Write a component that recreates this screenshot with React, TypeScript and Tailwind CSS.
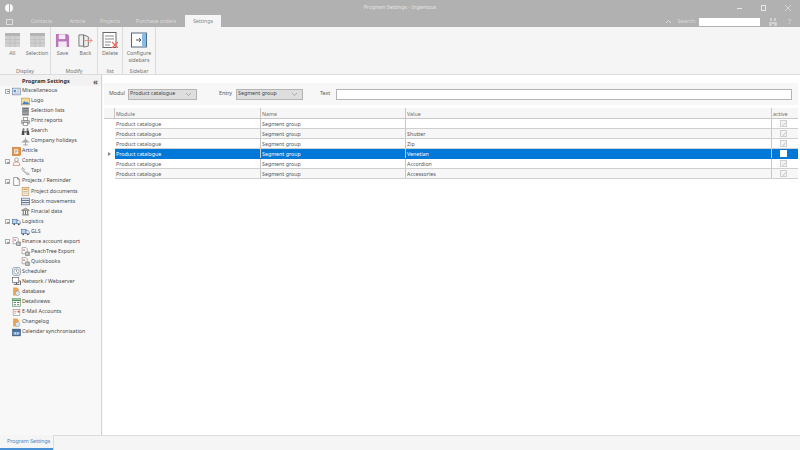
import type { ReactNode } from 'react';

const Svg = ({ s = 9, v = 16, children }: { s?: number; v?: number; children: ReactNode }) => (
  <svg width={s} height={s} viewBox={`0 0 ${v} ${v}`} fill="none" className="shrink-0">
    {children}
  </svg>
);

const treeIcons: Record<string, ReactNode> = {
  misc: (
    <>
      <rect x="1" y="2" width="14" height="12" fill="#e8eef8" stroke="#5a6f92" />
      <rect x="3" y="5" width="4" height="4" fill="#5f92d8" />
      <path d="M9 5h4M9 8h4M3 11h10" stroke="#8a9ab0" />
    </>
  ),
  logo: (
    <>
      <rect x="1" y="2" width="14" height="12" fill="#f4dc9a" stroke="#b08a3a" />
      <path d="M2 13l4-6 3 3 2-2 4 5z" fill="#3f7fd0" />
    </>
  ),
  lists: (
    <>
      <rect x="2" y="1" width="12" height="14" fill="#6f7378" />
      <path d="M2 5h12M2 9h12M2 12h12" stroke="#e8e8e8" />
    </>
  ),
  print: (
    <>
      <rect x="4" y="1" width="8" height="5" fill="#fff" stroke="#666" />
      <rect x="1" y="6" width="14" height="6" rx="1" fill="#c6c6c6" stroke="#666" />
      <rect x="4" y="10" width="8" height="5" fill="#fff" stroke="#666" />
    </>
  ),
  search: (
    <>
      <path d="M2 6h4v8H1zM10 6h4l1 8H10z" fill="#4c4c4c" />
      <path d="M3 2h3v4H3zM10 2h3v4h-3zM6 7h4v3H6z" fill="#777" />
    </>
  ),
  holiday: (
    <>
      <path d="M8 1v14M1 9h14M4 14h8" stroke="#777" />
      <path d="M5 5h6l2 4H3z" fill="#a8a8a8" />
    </>
  ),
  orange: (
    <>
      <rect x="1" y="1" width="14" height="14" fill="#e8913c" stroke="#b86a20" />
      <rect x="4" y="4" width="7" height="8" fill="#fff" />
      <path d="M5 6h5M5 8h5M5 10h3" stroke="#888" />
    </>
  ),
  person: (
    <>
      <circle cx="8" cy="5" r="3.2" fill="#fff" stroke="#666" />
      <path d="M2 15l2-6h8l2 6z" fill="#fff" stroke="#c05a4a" />
    </>
  ),
  phone: (
    <path d="M3 1c-2 1-2 3 0 5l6 6c2 2 4 2 6 1l-3-3-2 1-5-5 1-2z" fill="#f0f0f0" stroke="#777" />
  ),
  page: <path d="M3 1h7l3 3v11H3zM10 1v3h3" fill="#fff" stroke="#555" />,
  doc: (
    <>
      <rect x="2" y="1" width="12" height="14" fill="#fbf2df" stroke="#b8772e" />
      <path d="M4 4h8" stroke="#d98a30" strokeWidth="2" />
      <path d="M4 8h8M4 11h8" stroke="#999" />
    </>
  ),
  stock: (
    <>
      <rect x="1" y="2" width="14" height="12" fill="#eaf1fa" stroke="#3c4f68" />
      <path d="M1 6h14M1 10h14" stroke="#3c4f68" strokeWidth="1.5" />
    </>
  ),
  bank: (
    <>
      <path d="M1 6l7-4 7 4z" fill="#c9b89a" stroke="#555" />
      <path d="M4 7v6M8 7v6M12 7v6" stroke="#555" strokeWidth="1.5" />
      <path d="M2 14h12" stroke="#555" strokeWidth="1.5" />
    </>
  ),
  truck: (
    <>
      <rect x="1" y="4" width="8" height="8" fill="#bcd3ee" stroke="#3a6595" />
      <path d="M9 6h3l3 3v3H9z" fill="#eef3fa" stroke="#3a6595" />
      <circle cx="4" cy="13" r="1.5" fill="#444" />
      <circle cx="12" cy="13" r="1.5" fill="#444" />
    </>
  ),
  finance: (
    <>
      <path d="M2 1h7l2 2v9H2z" fill="#fff" stroke="#777" />
      <path d="M4 4l3 3M7 4l-3 3" stroke="#c9483a" />
      <path d="M8 9h7v6H8zM10.500 9v6M13 9v6" fill="#fff" stroke="#555" />
    </>
  ),
  clock: (
    <>
      <rect x="1" y="1" width="14" height="14" rx="3" fill="#eef2f6" stroke="#66788c" />
      <circle cx="8" cy="8" r="4.500" fill="#fff" stroke="#66788c" />
      <path d="M8 5v3l2 2" stroke="#444" />
    </>
  ),
  network: (
    <>
      <rect x="1" y="1" width="11" height="9" fill="#fff" stroke="#444" />
      <path d="M3 13h10M8 10v3M13 7h2v7" stroke="#444" strokeWidth="1.500" />
    </>
  ),
  db: (
    <>
      <path d="M2 1h7l3 3v11H2z" fill="#f0a24e" />
      <circle cx="10" cy="11" r="4" fill="#dbe9f6" stroke="#7da0c4" />
    </>
  ),
  detail: (
    <>
      <rect x="1" y="1" width="14" height="14" fill="#fff" stroke="#3b8a4a" />
      <path d="M1 4h14" stroke="#3b8a4a" strokeWidth="2.500" />
      <path d="M3 8h4M9 8h4M3 12h4M9 12h4" stroke="#555" strokeWidth="1.500" />
    </>
  ),
  mail: (
    <>
      <rect x="2" y="3" width="12" height="10" fill="#fff" stroke="#777" />
      <path d="M4 6h4M4 9h3" stroke="#c9483a" />
      <rect x="10" y="5" width="3" height="3" fill="#c9483a" />
    </>
  ),
  calendar: (
    <>
      <rect x="1" y="2" width="14" height="12" fill="#3f6f9f" stroke="#2c4c70" />
      <rect x="3" y="7" width="10" height="5" fill="#dbe7f3" />
      <path d="M5 7v5M8 7v5M11 7v5" stroke="#3f6f9f" />
    </>
  ),
};

const tree: [number, string, string, boolean?][] = [
  [0, 'misc', 'Miscellaneous', true],
  [1, 'logo', 'Logo'],
  [1, 'lists', 'Selection lists'],
  [1, 'print', 'Print reports'],
  [1, 'search', 'Search'],
  [1, 'holiday', 'Company holidays'],
  [0, 'orange', 'Article'],
  [0, 'person', 'Contacts', true],
  [1, 'phone', 'Tapi'],
  [0, 'page', 'Projects / Reminder', true],
  [1, 'doc', 'Project documents'],
  [1, 'stock', 'Stock movements'],
  [1, 'bank', 'Finacial data'],
  [0, 'truck', 'Logistics', true],
  [1, 'truck', 'GLS'],
  [0, 'finance', 'Finance account export', true],
  [1, 'finance', 'PeachTree Export'],
  [1, 'finance', 'Quickbooks'],
  [0, 'clock', 'Scheduler'],
  [0, 'network', 'Network / Webserver'],
  [0, 'db', 'database'],
  [0, 'detail', 'Detailviews'],
  [0, 'mail', 'E-Mail Accounts'],
  [0, 'db', 'Changelog'],
  [0, 'calendar', 'Calendar synchronisation'],
];

const rows = [
  ['Product catalogue', 'Segment group', ''],
  ['Product catalogue', 'Segment group', 'Shutter'],
  ['Product catalogue', 'Segment group', 'Zip'],
  ['Product catalogue', 'Segment group', 'Venetian'],
  ['Product catalogue', 'Segment group', 'Accordion'],
  ['Product catalogue', 'Segment group', 'Accessories'],
];

const GridIcon = () => (
  <svg width="15" height="14" viewBox="0 0 15 14" className="shrink-0">
    <rect width="15" height="14" fill="#cfcfcf" />
    <rect width="15" height="3" fill="#b4b4b4" />
    <path d="M0 6.500h15M0 10h15M5 3v11M10 3v11" stroke="#b8b8b8" strokeWidth="0.6" />
  </svg>
);

const RibbonButton = ({ icon, label }: { icon: ReactNode; label: string }) => (
  <div className="flex flex-col items-center gap-[2px]">
    <div className="h-[16px] flex items-center">{icon}</div>
    <span className="text-center leading-[7px] whitespace-pre-line">{label}</span>
  </div>
);

const RibbonGroup = ({ title, gap, width, children }: { title: string; gap: string; width: string; children: ReactNode }) => (
  <div className={`${width} h-full flex flex-col border-r border-[#dcdcdc]`}>
    <div className={`h-[40px] flex justify-center pt-[5px] ${gap}`}>{children}</div>
    <div className="h-[7px] text-center leading-[8px] text-[#777]">{title}</div>
  </div>
);

const Select = ({ value, width }: { value: string; width: string }) => (
  <div className={`${width} h-[11px] bg-[#dedede] border border-[#b4b4b4] flex items-center justify-between pl-[1px] pr-[5px]`}>
    <span className="text-[#444]">{value}</span>
    <svg width="5" height="3" viewBox="0 0 5 3" fill="none">
      <path d="M0 0l2.500 2.500L5 0" stroke="#888" strokeWidth="0.6" />
    </svg>
  </div>
);

export default function App() {
  return (
    <div
      className="w-[800px] h-[450px] overflow-hidden flex flex-col bg-[#f5f5f5] text-[5.300px] text-[#555]"
      style={{ fontFamily: '"Noto Sans", sans-serif' }}
    >
      {/* title bar */}
      <div className="h-[16px] shrink-0 bg-[#b1b1b1] flex items-center pl-[5px] text-[#e4e4e4]">
        <div className="w-[8px] h-[8px] rounded-full bg-white/90 flex justify-center">
          <div className="w-[1px] h-full bg-[#b1b1b1]" />
        </div>
        <div className="flex-1 text-center pl-[132px]">Program Settings - Ingenious</div>
        <div className="w-[145px] flex items-center justify-between pl-[82px] pr-[9px]">
          <div className="w-[5px] h-px bg-[#e8e8e8]" />
          <div className="w-[5px] h-[6px] border border-[#e8e8e8]" />
          <svg width="6" height="6" viewBox="0 0 6 6" stroke="#e8e8e8" strokeWidth="0.7">
            <path d="M0 0l6 6M6 0L0 6" />
          </svg>
        </div>
      </div>

      {/* tab row */}
      <div className="h-[11px] shrink-0 bg-[#b1b1b1] flex items-stretch text-[#dcdcdc]">
        <div className="w-[21px] flex items-center pl-[6px]">
          <div className="w-[7px] h-[6px] border border-[#dcdcdc]" />
        </div>
        <div className="w-[41px] text-center leading-[11px]">Contacts</div>
        <div className="w-[31px] text-center leading-[11px]">Article</div>
        <div className="w-[34px] text-center leading-[11px]">Projects</div>
        <div className="w-[58px] text-center leading-[11px]">Purchase orders</div>
        <div className="w-[36px] -mt-[1px] bg-[#f5f5f5] text-[#888] text-center leading-[12px]">Settings</div>
        <div className="flex-1 flex items-center justify-end pr-[7px]">
          <svg width="5" height="3" viewBox="0 0 5 3" fill="none" className="mr-[7px]">
            <path d="M0 3l2.500-2.500L5 3" stroke="#eee" strokeWidth="0.8" />
          </svg>
          <span className="mr-[3px]">Search:</span>
          <div className="w-[61px] h-[8px] bg-white" />
          <svg width="8" height="8" viewBox="0 0 8 8" fill="#d0d0d0" className="ml-[9px]">
            <path d="M1 0h2v3H1zM5 0h2v3H5zM0 4h3v4H0zM5 4h3v4H5zM3 4h2v2H3z" />
          </svg>
          <span className="ml-[11px] text-[7px] leading-[8px] w-[5px]">?</span>
        </div>
      </div>

      {/* ribbon */}
      <div className="h-[48px] shrink-0 flex border-b border-[#dcdcdc] text-[#707070]">
        <RibbonGroup title="Display" gap="gap-[6px] pl-[3px]" width="w-[51px]">
          <RibbonButton icon={<GridIcon />} label="All" />
          <RibbonButton icon={<GridIcon />} label="Selection" />
        </RibbonGroup>
        <RibbonGroup title="Modify" gap="gap-[8px]" width="w-[47px]">
          <RibbonButton
            icon={
              <Svg s={15}>
                <path d="M1 1h12l2 2v12H1z" fill="#b877b8" />
                <rect x="4" y="1.500" width="7" height="5" fill="#f4e8f4" />
                <rect x="3.500" y="9" width="9" height="6" fill="#f4e8f4" />
              </Svg>
            }
            label="Save"
          />
          <RibbonButton
            icon={
              <Svg s={15}>
                <path d="M1 2h5v12H1zM6 2l5 2v10l-5 1z" fill="#eeeeee" stroke="#777" />
                <path d="M7 8h8M12 5l3 3-3 3" stroke="#f08a7e" />
              </Svg>
            }
            label="Back"
          />
        </RibbonGroup>
        <RibbonGroup title="list" gap="" width="w-[25px]">
          <RibbonButton
            icon={
              <Svg s={16}>
                <rect x="1" y="0.500" width="13" height="15" fill="#fff" stroke="#666" />
                <path d="M3 4h9M3 7h9M3 10h6M3 13h5" stroke="#888" />
                <path d="M10 10l6 6M16 10l-6 6" stroke="#ef6a5a" strokeWidth="1.300" />
              </Svg>
            }
            label="Delete"
          />
        </RibbonGroup>
        <RibbonGroup title="Sidebar" gap="" width="w-[33px]">
          <RibbonButton
            icon={
              <Svg s={16}>
                <rect x="0.500" y="1" width="15" height="14" fill="#fff" stroke="#50687f" />
                <rect x="11" y="1.500" width="4" height="13" fill="#85bcea" />
                <path d="M5 8h5M8 6l2 2-2 2" stroke="#555" />
              </Svg>
            }
            label={'Configure\nsidebars'}
          />
        </RibbonGroup>
      </div>

      {/* main */}
      <div className="flex-1 min-h-0 flex">
        <aside className="w-[102px] shrink-0 border-r border-[#d4d4d4] bg-[#f8f8f8] flex flex-col">
          <div className="h-[11px] shrink-0 bg-[#f2f2f2] flex items-center pl-[22px] pr-[3px] pt-[2px] justify-between">
            <span className="font-bold text-[#333] text-[5.500px]">Program Settings</span>
            <span className="font-bold text-[8px] leading-[8px] text-[#555]">«</span>
          </div>
          <div className="flex flex-col">
            {tree.map(([level, icon, label, expand]) => (
              <div key={label} className={`h-[10.050px] flex items-center ${level ? 'pl-[21px]' : 'pl-[5px]'}`}>
                {level === 0 && (
                  <span className="w-[7px] shrink-0">
                    {expand && (
                      <span className="block w-[5px] h-[5px] border-[0.500px] border-[#aaa] relative">
                        <span className="absolute left-[0.500px] right-[0.500px] top-[1.700px] h-[0.600px] bg-[#888]" />
                      </span>
                    )}
                  </span>
                )}
                <Svg>{treeIcons[icon]}</Svg>
                <span className="ml-[1px] whitespace-nowrap text-[#484848]">{label}</span>
              </div>
            ))}
          </div>
        </aside>

        <div className="flex-1 min-w-0 ml-[1px] flex flex-col bg-white">
          {/* filter */}
          <div className="h-[30px] shrink-0 bg-white pt-[8px] pl-[1px] pr-[2px]">
            <div className="h-[22px] bg-[#f7f7f7] flex items-center pl-[5px] pr-[6px]">
              <span className="w-[19px]">Modul</span>
              <Select value="Product catalogue" width="w-[69px]" />
              <span className="w-[17px] ml-[22px]">Entry</span>
              <Select value="Segment group" width="w-[67px]" />
              <span className="w-[12px] ml-[17px] mr-[4px]">Text</span>
              <div className="flex-1 h-[11px] bg-white border border-[#b4b4b4]" />
            </div>
          </div>
          {/* grid */}
          <div className="ml-[1px] mr-[2px] mt-[3px] flex flex-col">
            <div className="h-[11px] flex bg-[#f6f6f6] border-b border-[#c8c8c8] text-[#707070]">
              <div className="w-[11px] border-r border-[#c8c8c8]" />
              <div className="w-[146px] border-r border-[#c8c8c8] pl-[1px] leading-[12px]">Module</div>
              <div className="w-[145px] border-r border-[#c8c8c8] pl-[1px] leading-[12px]">Name</div>
              <div className="flex-1 border-r border-[#c8c8c8] pl-[1px] leading-[12px]">Value</div>
              <div className="w-[26px] pl-[1px] leading-[12px]">active</div>
            </div>
            {rows.map((row, i) => {
              const selected = i === 3;
              return (
                <div key={i} className="h-[10px] flex items-stretch">
                  <div className="w-[11px] shrink-0 bg-white flex items-center justify-center">
                    {selected && (
                      <svg width="3" height="4" viewBox="0 0 3 4">
                        <path d="M0 0l3 2-3 2z" fill="#888" />
                      </svg>
                    )}
                  </div>
                  <div
                    className={`flex-1 flex items-stretch border-b ${
                      selected
                        ? 'bg-[#0078d7] text-white border-[#0078d7]'
                        : `${i % 2 ? 'bg-[#f7f7f7]' : 'bg-white'} border-[#cfcfcf] text-[#555]`
                    }`}
                  >
                    <div className="w-[146px] border-r border-[#c8c8c8] pl-[1px] leading-[11px]">{row[0]}</div>
                    <div className="w-[145px] border-r border-[#c8c8c8] pl-[1px] leading-[11px]">{row[1]}</div>
                    <div className="flex-1 border-r border-[#c8c8c8] pl-[1px] leading-[11px] whitespace-nowrap">{row[2]}</div>
                    <div className="w-[26px] flex items-center justify-center pr-[3px]">
                      <div className={`w-[7px] h-[7px] border flex items-center justify-center ${selected ? 'bg-white border-white' : 'bg-[#f4f4f4] border-[#d0d0d0]'}`}>
                        {!selected && (
                          <svg width="4" height="4" viewBox="0 0 4 4" fill="none">
                            <path d="M0.500 2.500l1 1L3.500 0.500" stroke="#aaa" strokeWidth="0.600" />
                          </svg>
                        )}
                      </div>
                    </div>
                  </div>
                </div>
              );
            })}
          </div>
        </div>
      </div>

      {/* status bar */}
      <div className="h-[15px] shrink-0 flex">
        <div className="w-[53px] border-b-[2px] border-[#4a90d4] pl-[7px] pt-[2px] text-[#4a84c0] leading-[8px]">Program Settings</div>
        <div className="flex-1 border-t border-l border-[#dcdcdc]" />
      </div>
    </div>
  );
}
